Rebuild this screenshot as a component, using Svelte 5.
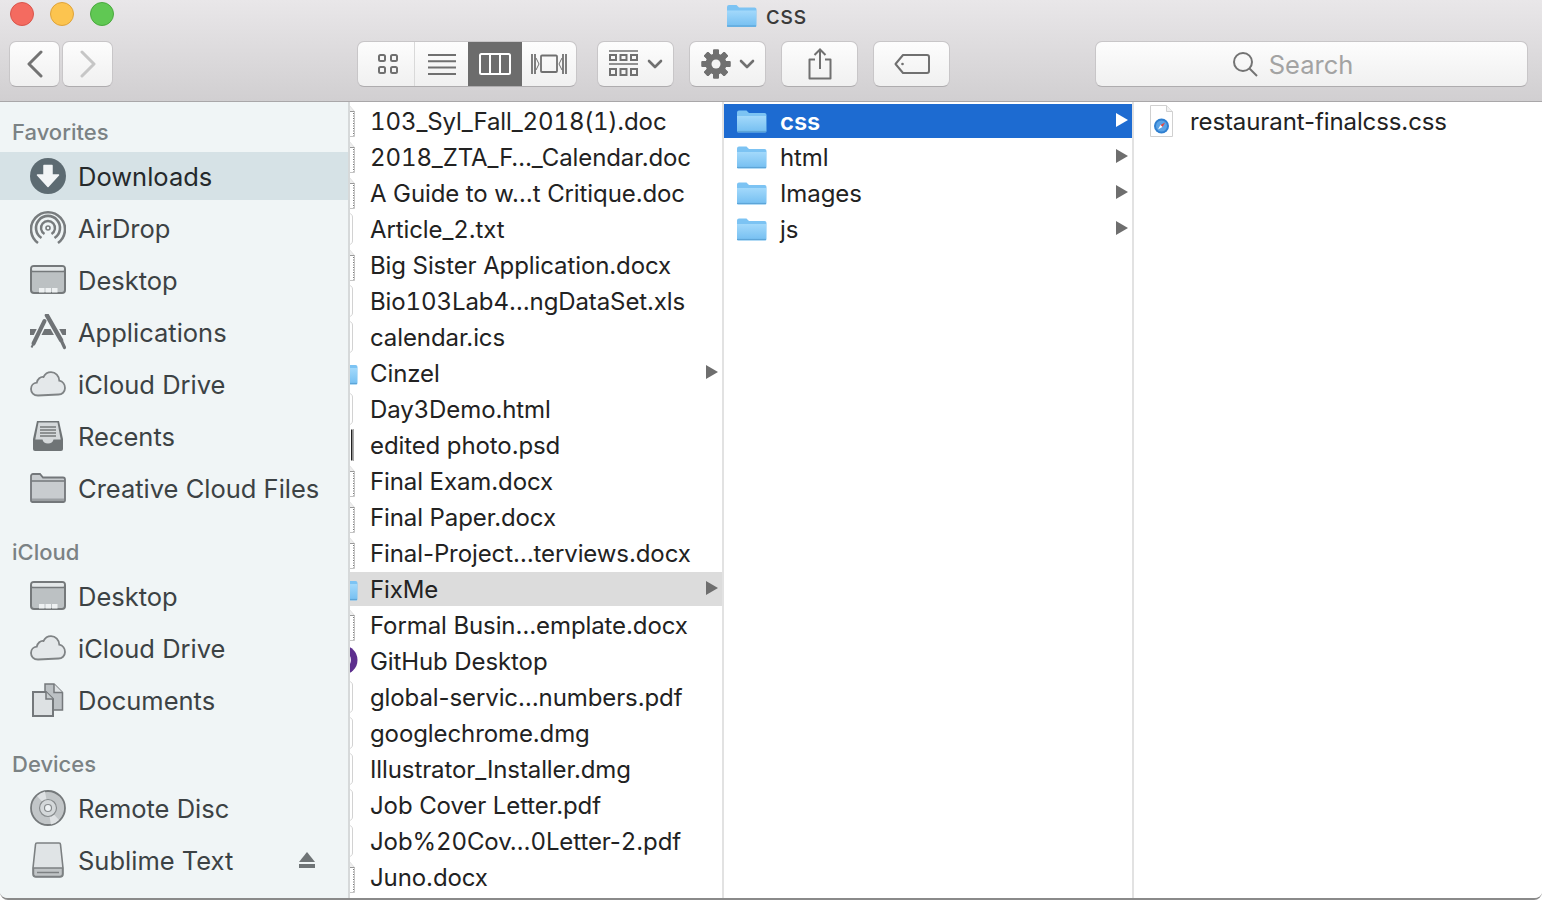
<script>
  const sections = [
    { title: 'Favorites', items: [
      { name: 'Downloads', icon: 'downloads', selected: true },
      { name: 'AirDrop', icon: 'airdrop' },
      { name: 'Desktop', icon: 'desktop' },
      { name: 'Applications', icon: 'apps' },
      { name: 'iCloud Drive', icon: 'cloud' },
      { name: 'Recents', icon: 'recents' },
      { name: 'Creative Cloud Files', icon: 'ccfolder' }
    ]},
    { title: 'iCloud', items: [
      { name: 'Desktop', icon: 'desktop' },
      { name: 'iCloud Drive', icon: 'cloud' },
      { name: 'Documents', icon: 'documents' }
    ]},
    { title: 'Devices', items: [
      { name: 'Remote Disc', icon: 'disc' },
      { name: 'Sublime Text', icon: 'drive', eject: true }
    ]}
  ];

  const files = [
    { name: '103_Syl_Fall_2018(1).doc', kind: 'doc' },
    { name: '2018_ZTA_F…_Calendar.doc', kind: 'doc' },
    { name: 'A Guide to w…t Critique.doc', kind: 'doc' },
    { name: 'Article_2.txt', kind: 'blank' },
    { name: 'Big Sister Application.docx', kind: 'doc' },
    { name: 'Bio103Lab4…ngDataSet.xls', kind: 'blank' },
    { name: 'calendar.ics', kind: 'blank' },
    { name: 'Cinzel', kind: 'folder', arrow: true },
    { name: 'Day3Demo.html', kind: 'blank' },
    { name: 'edited photo.psd', kind: 'psd' },
    { name: 'Final Exam.docx', kind: 'doc' },
    { name: 'Final Paper.docx', kind: 'doc' },
    { name: 'Final-Project…terviews.docx', kind: 'doc' },
    { name: 'FixMe', kind: 'folder', arrow: true, parent: true },
    { name: 'Formal Busin…emplate.docx', kind: 'doc' },
    { name: 'GitHub Desktop', kind: 'github' },
    { name: 'global-servic…numbers.pdf', kind: 'blank' },
    { name: 'googlechrome.dmg', kind: 'blank' },
    { name: 'Illustrator_Installer.dmg', kind: 'blank' },
    { name: 'Job Cover Letter.pdf', kind: 'blank' },
    { name: 'Job%20Cov…0Letter-2.pdf', kind: 'blank' },
    { name: 'Juno.docx', kind: 'doc' }
  ];

  const folders = [
    { name: 'css', kind: 'folder', arrow: true, active: true },
    { name: 'html', kind: 'folder', arrow: true },
    { name: 'Images', kind: 'folder', arrow: true },
    { name: 'js', kind: 'folder', arrow: true }
  ];

  const columns = [
    { cls: 'first', rows: files },
    { cls: 'second', rows: folders },
    { cls: 'third', rows: [{ name: 'restaurant-finalcss.css', kind: 'safari' }] }
  ];

  const gearTeeth = [0, 45, 90, 135, 180, 225, 270, 315];

  // digits are wider in the Finder font, hyphens are not
  const nameParts = (name) => name.split(/(\d+)/);
</script>

{#snippet folderIcon(w, h)}
  <svg width={w} height={h} viewBox="0 0 31 24">
    <defs>
      <linearGradient id="fold" x1="0" y1="0" x2="0" y2="1">
        <stop offset="0" stop-color="#a3d9fb" />
        <stop offset="1" stop-color="#75bff1" />
      </linearGradient>
    </defs>
    <path d="M1 3.500a2 2 0 0 1 2-2h7.500l2.500 2.500h15.500a2 2 0 0 1 2 2V22a1.500 1.500 0 0 1-1.500 1.500h-27A1.500 1.500 0 0 1 1 22z" fill="#7cc3f3" />
    <path d="M1 7h29v15a1.500 1.500 0 0 1-1.500 1H2.500A1.500 1.500 0 0 1 1 22z" fill="url(#fold)" />
    <path d="M1 22.500h29" stroke="#5da5d8" stroke-width="1.200" />
  </svg>
{/snippet}

{#snippet sideIcon(name)}
  {#if name === 'downloads'}
    <svg width="36" height="36" viewBox="0 0 36 36">
      <circle cx="18" cy="18" r="18" fill="#5d6b72" />
      <path d="M14 7.500h8V17h6.500L18 28.500 7.500 17H14z" fill="#f2f5f6" stroke="#f2f5f6" stroke-linejoin="round" stroke-width="1.500" />
    </svg>
  {:else if name === 'airdrop'}
    <svg width="36" height="36" viewBox="0 0 36 36" fill="none" stroke="#787c7e">
      <path d="M8 33A17 17 0 1 1 28 33" stroke-width="2.600" />
      <path d="M11.500 28A12 12 0 1 1 24.500 28" stroke-width="2.600" />
      <path d="M14.500 24A7 7 0 1 1 21.500 24" stroke-width="2.400" />
      <circle cx="18" cy="18" r="2" stroke-width="1.600" />
    </svg>
  {:else if name === 'desktop'}
    <svg width="36" height="30" viewBox="0 0 36 30">
      <rect x="1" y="1" width="34" height="27" rx="3" fill="#bcc1c3" stroke="#75797b" stroke-width="2" />
      <path d="M2 6.500h32" stroke="#75797b" stroke-width="1.500" />
      <rect x="2" y="2" width="32" height="3.500" rx="1.500" fill="#e4e8e9" />
      <path d="M9 23h5.500v4.500H9zM15.500 23H21v4.500h-5.500zM22 23h5.500v4.500H22z" fill="#eef1f2" />
    </svg>
  {:else if name === 'apps'}
    <svg width="36" height="36" viewBox="0 0 36 36" fill="none">
      <rect x="0" y="15" width="36" height="6" fill="#6f7376" />
      <path d="M14.500 7L3.500 29.500" stroke="#f0f5f6" stroke-width="7" />
      <path d="M17 1L31 26" stroke="#f0f5f6" stroke-width="7.500" />
      <path d="M14.500 7L3.500 29.500" stroke="#6f7376" stroke-width="4" stroke-linecap="round" />
      <path d="M3.500 29.500L1.500 33.500" stroke="#6f7376" stroke-width="2" />
      <path d="M17 1.500L31 26" stroke="#6f7376" stroke-width="4.500" stroke-linecap="round" />
      <path d="M31 26L34.500 33.500" stroke="#6f7376" stroke-width="3.200" stroke-linecap="round" />
    </svg>
  {:else if name === 'cloud'}
    <svg width="36" height="26" viewBox="0 0 36 26">
      <path d="M8 24.500C3.500 24.500 1 21.500 1 18c0-3.500 2.500-6 5.800-6.300C7.500 8 10.500 5.500 13.500 6c1.500-3 4.500-4.800 7.500-4.800 4.700 0 8 3.500 8.300 8.500 3.500.8 5.700 4 5.700 7.300 0 4-3 6.500-6.500 6.500z" fill="#e4e8ea" stroke="#7f8385" stroke-width="1.800" />
    </svg>
  {:else if name === 'recents'}
    <svg width="32" height="32" viewBox="0 0 32 32">
      <path d="M5 1h22l4 18v10a2 2 0 0 1-2 2H3a2 2 0 0 1-2-2V19z" fill="#6f7476" />
      <path d="M6.500 2.500h19l3.200 17H21.500c-.5 2.500-2.500 4-5.500 4s-5-1.500-5.500-4H3.300z" fill="#d5d9db" />
      <path d="M8 7h16M8 10h16M8 13h16M8 16h16" stroke="#75797b" stroke-width="1.300" />
    </svg>
  {:else if name === 'ccfolder'}
    <svg width="36" height="30" viewBox="0 0 36 30">
      <path d="M1 3a2 2 0 0 1 2-2h7l3 3.500h20a2 2 0 0 1 2 2V27.500a1.500 1.500 0 0 1-1.500 1.500h-31A1.500 1.500 0 0 1 1 27.500z" fill="#c8cccf" stroke="#73777a" stroke-width="1.800" />
      <path d="M1.500 8h33" stroke="#73777a" stroke-width="1.500" />
      <path d="M2 25.500h32V28H2z" fill="#9b9fa2" />
    </svg>
  {:else if name === 'documents'}
    <svg width="32" height="34" viewBox="0 0 32 34">
      <path d="M13 1h9l8.500 8.500V27H13z" fill="#bcc1c4" stroke="#74787b" stroke-width="1.500" />
      <path d="M22 1v8.500h8.500" fill="#dfe3e5" stroke="#74787b" stroke-width="1.500" />
      <path d="M1 9h13l7 7v17H1z" fill="#dde1e3" stroke="#74787b" stroke-width="2" />
      <path d="M14 9v7h7" fill="#c6cbcd" stroke="#74787b" stroke-width="1.500" />
    </svg>
  {:else if name === 'disc'}
    <svg width="36" height="36" viewBox="0 0 36 36">
      <circle cx="18" cy="18" r="17" fill="#c2c6c8" stroke="#75797b" stroke-width="1.800" />
      <path d="M18 18L7 6a16 16 0 0 1 8-4.500zM18 18l11 12a16 16 0 0 1-8 4.500z" fill="#dfe2e4" />
      <circle cx="18" cy="18" r="8.500" fill="#d4d8da" stroke="#878b8d" stroke-width="1.200" />
      <circle cx="18" cy="18" r="3.500" fill="#eff3f5" stroke="#878b8d" stroke-width="1.200" />
    </svg>
  {:else if name === 'drive'}
    <svg width="32" height="36" viewBox="0 0 32 36">
      <path d="M5 1h22a1.500 1.500 0 0 1 1.500 1.500L31 26v6a3 3 0 0 1-3 3H4a3 3 0 0 1-3-3v-6L3.500 2.500A1.500 1.500 0 0 1 5 1z" fill="#e0e4e6" stroke="#7c8082" stroke-width="1.600" />
      <path d="M1.500 26h29v6a2.500 2.500 0 0 1-2.500 2.500H4A2.500 2.500 0 0 1 1.500 32z" fill="#c0c4c6" stroke="#7c8082" stroke-width="1.400" />
      <path d="M5 30.500h22" stroke="#7c8082" stroke-width="1.400" />
    </svg>
  {/if}
{/snippet}

{#snippet fileIcon(kind)}
  {#if kind === 'folder'}
    {@render folderIcon(31, 24)}
  {:else if kind === 'doc'}
    <svg width="31" height="32" viewBox="0 0 31 32">
      <path d="M4 .5h18l5.500 6V31.500H4z" fill="#fff" stroke="#c4c4c4" />
      <path d="M22 .5v6h5.500" fill="#eee" stroke="#999" />
      <path d="M26.500 8v23" stroke="#777" stroke-dasharray="1 1.500" />
    </svg>
  {:else if kind === 'blank'}
    <svg width="31" height="32" viewBox="0 0 31 32">
      <path d="M4 .5h18c2 0 3.500 1.500 3.500 3.500v24c0 2-1.500 3.500-3.500 3.500H4z" fill="#fff" stroke="#d2d2d2" />
    </svg>
  {:else if kind === 'psd'}
    <svg width="31" height="32" viewBox="0 0 31 32">
      <path d="M24 .5h1.500v31H24z" fill="#222" />
      <path d="M26.500 0v32" stroke="#aaa" />
    </svg>
  {:else if kind === 'github'}
    <svg width="31" height="32" viewBox="0 0 31 32">
      <circle cx="16" cy="15" r="14.500" fill="#5d2f8e" />
      <circle cx="16" cy="15" r="8" fill="#efe9f5" />
    </svg>
  {:else if kind === 'safari'}
    <svg width="31" height="32" viewBox="0 0 31 32">
      <path d="M4.500 .5h16l6 6V31.500H4.500z" fill="#fff" stroke="#d0d0d0" />
      <path d="M20.500 .5v6h6" fill="#f2f2f2" stroke="#d0d0d0" />
      <circle cx="15.500" cy="21" r="7.500" fill="#2f7fd0" />
      <circle cx="15.500" cy="21" r="5.500" fill="#5aa3e6" />
      <path d="M19 17.500l-2.500 4.500-2-2z" fill="#e8453c" />
      <path d="M12 24.500l2.500-4.500 2 2z" fill="#fff" />
    </svg>
  {/if}
{/snippet}

<div class="window">
  <header class="chrome">
    <div class="titlebar">
      <div class="lights">
        <span class="light red"></span>
        <span class="light yellow"></span>
        <span class="light green"></span>
      </div>
      <div class="title">
        {@render folderIcon(31, 25)}
        <span>css</span>
      </div>
    </div>

    <div class="toolbar">
      <div class="nav">
        <button class="btn nav-btn" aria-label="Back">
          <svg width="16" height="28" viewBox="0 0 16 28" fill="none" stroke="#737373" stroke-width="3" stroke-linecap="round" stroke-linejoin="round"><path d="M14 2L2 14l12 12" /></svg>
        </button>
        <button class="btn nav-btn" aria-label="Forward">
          <svg width="16" height="28" viewBox="0 0 16 28" fill="none" stroke="#c6c6c6" stroke-width="3" stroke-linecap="round" stroke-linejoin="round"><path d="M2 2l12 12L2 26" /></svg>
        </button>
      </div>

      <div class="btn views">
        <span class="view icons">
          <svg width="22" height="22" viewBox="0 0 22 22" fill="none" stroke="#707070" stroke-width="2"><rect x="2" y="2" width="6" height="6" rx="1.500" /><rect x="14" y="2" width="6" height="6" rx="1.500" /><rect x="2" y="14" width="6" height="6" rx="1.500" /><rect x="14" y="14" width="6" height="6" rx="1.500" /></svg>
        </span>
        <span class="view list">
          <svg width="30" height="22" viewBox="0 0 30 22" stroke="#707070" stroke-width="2"><path d="M1 2h28M1 8.300h28M1 14.600h28M1 21h28" /></svg>
        </span>
        <span class="view cols active">
          <svg width="32" height="22" viewBox="0 0 32 22" fill="none" stroke="#fff" stroke-width="2"><rect x="1" y="1" width="30" height="20" rx="1.500" /><path d="M11 1v20M21 1v20" /></svg>
        </span>
        <span class="view flow">
          <svg width="36" height="22" viewBox="0 0 36 22" fill="none" stroke="#707070" stroke-width="1.800"><rect x="10" y="2.500" width="16" height="16.500" rx="1" /><path d="M1 1v20M4 1v20M35 1v20M32 1v20" /><path d="M5 5l3 6-3 6M31 5l-3 6 3 6" stroke-width="1" /></svg>
        </span>
      </div>

      <button class="btn tool arrange" aria-label="Arrange">
        <svg width="30" height="28" viewBox="0 0 30 28" fill="none" stroke="#707070" stroke-width="2"><path d="M0 1h29M0 14h29" stroke-width="1.600" /><rect x="1" y="5" width="6" height="5" /><rect x="11.500" y="5" width="6" height="5" /><rect x="22" y="5" width="6" height="5" /><rect x="1" y="19" width="6" height="6" /><rect x="11.500" y="19" width="6" height="6" /><rect x="22" y="19" width="6" height="6" /></svg>
        <svg class="chev" width="16" height="10" viewBox="0 0 16 10" fill="none" stroke="#707070" stroke-width="2.600" stroke-linecap="round" stroke-linejoin="round"><path d="M2 2l6 6 6-6" /></svg>
      </button>
      <button class="btn tool" aria-label="Action">
        <svg width="30" height="30" viewBox="0 0 30 30">
          {#each gearTeeth as deg}
            <rect x="12" y="0.500" width="6" height="29" rx="1" fill="#707070" transform="rotate({deg} 15 15)" />
          {/each}
          <circle cx="15" cy="15" r="10.500" fill="#707070" />
          <circle cx="15" cy="15" r="4.500" fill="#f4f4f4" />
        </svg>
        <svg class="chev" width="16" height="10" viewBox="0 0 16 10" fill="none" stroke="#707070" stroke-width="2.600" stroke-linecap="round" stroke-linejoin="round"><path d="M2 2l6 6 6-6" /></svg>
      </button>
      <button class="btn tool" aria-label="Share">
        <svg width="24" height="32" viewBox="0 0 24 32" fill="none" stroke="#707070" stroke-width="2"><path d="M7 11.500H1.500v19h21v-19H17" stroke-linejoin="round" /><path d="M12 21V2M6.500 7L12 1.500 17.500 7" /></svg>
      </button>
      <button class="btn tool" aria-label="Tags">
        <svg width="36" height="22" viewBox="0 0 36 22" fill="none" stroke="#707070" stroke-width="2"><path d="M9 2h24a2 2 0 0 1 2 2v14a2 2 0 0 1-2 2H9l-7.500-9z" stroke-linejoin="round" /><circle cx="8.500" cy="11" r="1.300" fill="#707070" stroke="none" /></svg>
      </button>

      <div class="btn search">
        <svg width="26" height="26" viewBox="0 0 26 26" fill="none" stroke="#737373" stroke-width="2"><circle cx="11" cy="11" r="9" /><path d="M17.500 17.500L25 25" /></svg>
        <span>Search</span>
      </div>
    </div>
  </header>

  <main class="body">
    <aside class="sidebar">
      {#each sections as section}
        <section class="group">
          <h3>{section.title}</h3>
          {#each section.items as item}
            <div class="side-row" class:selected={item.selected}>
              <span class="side-icon">{@render sideIcon(item.icon)}</span>
              <span class="side-name">{item.name}</span>
              {#if item.eject}
                <svg class="eject" width="18" height="18" viewBox="0 0 18 18" fill="#6f7476"><path d="M9 1l8 10H1z" /><rect x="1" y="13" width="16" height="4" /></svg>
              {/if}
            </div>
          {/each}
        </section>
      {/each}
    </aside>

    {#each columns as col}
      <div class="column {col.cls}">
        {#each col.rows as row}
          <div class="row" class:active={row.active} class:parent={row.parent}>
            <span class="file-icon">{@render fileIcon(row.kind)}</span>
            <span class="file-name">{#each nameParts(row.name) as part, i}{#if i % 2}<span class="num">{part}</span>{:else}{part}{/if}{/each}</span>
            {#if row.arrow}
              <svg class="arrow" width="12" height="14" viewBox="0 0 12 14"><path d="M0 0l12 7-12 7z" /></svg>
            {/if}
          </div>
        {/each}
      </div>
    {/each}
  </main>
</div>

<style>
  :global(body) {
    margin: 0;
    background: #fff;
  }

  .window {
    height: 900px;
    width: 1542px;
    display: flex;
    flex-direction: column;
    overflow: hidden;
    font-family: Inter, "Liberation Sans", sans-serif;
    color: #222;
    border-bottom: 2px solid #8a8a8a;
    border-radius: 0 0 8px 8px;
    box-sizing: border-box;
  }

  .chrome {
    height: 102px;
    flex: none;
    box-sizing: border-box;
    background: linear-gradient(#e9e7e9, #d1cfd1);
    border-bottom: 1px solid #a9a7a9;
  }

  .titlebar {
    height: 30px;
    position: relative;
    display: flex;
    align-items: center;
    justify-content: center;
    padding-right: 10px;
  }

  .lights {
    position: absolute;
    left: 10px;
    top: 2px;
    display: flex;
    gap: 16px;
  }

  .light {
    width: 22px;
    height: 22px;
    border-radius: 50%;
    border: 1px solid;
  }
  .red { background: #f46b60; border-color: #d9554b; }
  .yellow { background: #fcc44f; border-color: #dfa33a; }
  .green { background: #60c853; border-color: #4aa93e; }

  .title {
    display: flex;
    align-items: center;
    gap: 9px;
    font-size: 25px;
    color: #3a3a3a;
  }

  .toolbar {
    display: flex;
    align-items: center;
    margin-top: 11px;
    padding: 0 14px 0 9px;
  }

  .btn {
    box-sizing: border-box;
    height: 46px;
    border: 1px solid #c8c6c8;
    border-bottom-color: #aeacae;
    border-radius: 7px;
    background: linear-gradient(#fdfdfd, #f0f0f0);
    padding: 0;
    display: flex;
    align-items: center;
    justify-content: center;
  }

  .nav {
    display: flex;
    gap: 2px;
  }
  .nav-btn {
    width: 51px;
  }

  .views {
    margin-left: 244px;
    width: 220px;
    overflow: hidden;
    justify-content: flex-start;
  }
  .view {
    height: 100%;
    display: flex;
    align-items: center;
    justify-content: center;
    box-sizing: border-box;
  }
  .view.icons { width: 57px; padding-left: 3px; border-right: 1px solid #d9d9d9; }
  .view.list { width: 53px; }
  .view.cols { width: 54px; }
  .view.flow { width: 54px; }
  .view.active { background: #6c6c6c; }

  .tool {
    width: 77px;
    margin-left: 15px;
    gap: 8px;
  }
  .arrange {
    margin-left: 20px;
  }

  .search {
    margin-left: 145px;
    flex: 1;
    gap: 11px;
    padding-right: 38px;
    font-size: 25.5px;
    color: #a3a3a3;
  }

  .body {
    flex: 1;
    min-height: 0;
    display: flex;
  }

  .sidebar {
    width: 350px;
    flex: none;
    box-sizing: border-box;
    padding-top: 8px;
    background: #f0f5f6;
    border-right: 2px solid #d6d9da;
    overflow: hidden;
  }

  .group {
    margin-bottom: 18px;
  }

  h3 {
    margin: 0;
    height: 42px;
    line-height: 44px;
    padding-left: 12px;
    font-size: 22px;
    font-weight: 500;
    color: #7b8284;
  }

  .side-row {
    height: 48px;
    margin-bottom: 4px;
    display: flex;
    align-items: center;
    padding-left: 30px;
    font-size: 25.5px;
    color: #3c4244;
  }
  .side-row:last-child {
    margin-bottom: 0;
  }
  .side-row.selected {
    background: #d6e2e6;
    color: #25292b;
  }

  .side-icon {
    width: 36px;
    margin-right: 12px;
    display: flex;
    justify-content: center;
    flex: none;
  }

  .eject {
    margin-left: auto;
    margin-right: 32px;
  }

  .column {
    box-sizing: border-box;
    padding-top: 2px;
    overflow: hidden;
    border-right: 2px solid #e2e2e2;
    background: #fff;
  }
  .first { width: 374px; }
  .second { width: 410px; }
  .third { flex: 1; border-right: none; }

  .row {
    height: 34px;
    margin-bottom: 2px;
    display: flex;
    align-items: center;
    padding-left: 12px;
    font-size: 24px;
    letter-spacing: -0.1px;
    color: #222;
    white-space: nowrap;
  }
  .num {
    font-variant-numeric: tabular-nums;
  }
  .first .row {
    padding-left: 0;
  }
  .first .file-icon {
    margin-left: -23px;
  }
  .third .row {
    padding-left: 12px;
  }

  .file-icon {
    width: 31px;
    margin-right: 13px;
    flex: none;
    display: flex;
  }
  .first .file-icon {
    margin-right: 12px;
  }
  .third .file-icon {
    margin-right: 13px;
  }

  .arrow {
    margin-left: auto;
    margin-right: 4px;
    margin-bottom: 2px;
    fill: #6e6e6e;
  }

  .row.parent {
    background: #dcdcdc;
  }
  .row.active {
    background: #1d6bd1;
    color: #fff;
    font-weight: 600;
  }
  .row.active .arrow {
    fill: #fff;
  }
</style>
